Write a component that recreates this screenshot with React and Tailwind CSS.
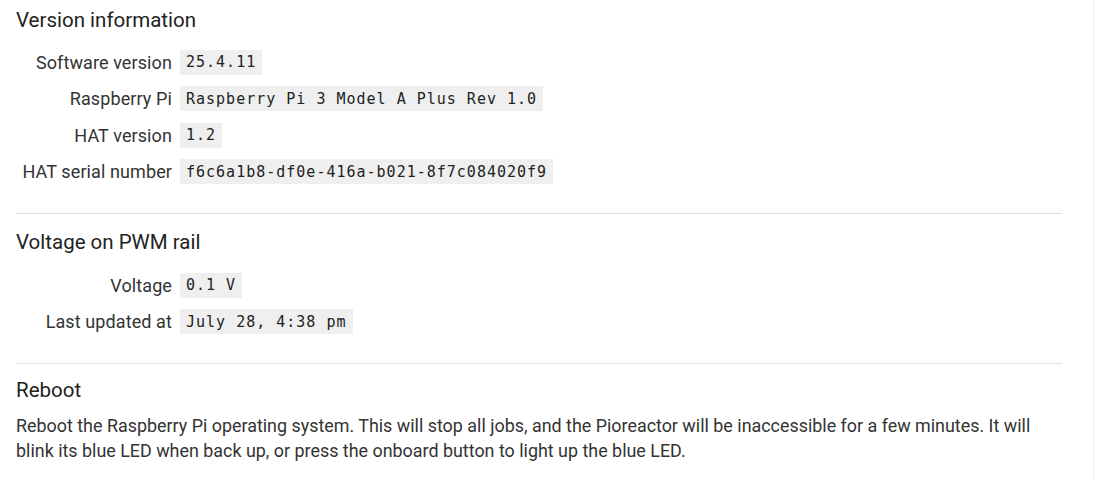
import React from 'react';

const versionRows = [
  ['Software version', '25.4.11'],
  ['Raspberry Pi', 'Raspberry Pi 3 Model A Plus Rev 1.0'],
  ['HAT version', '1.2'],
  ['HAT serial number', 'f6c6a1b8-df0e-416a-b021-8f7c084020f9'],
];

const voltageRows = [
  ['Voltage', '0.1 V'],
  ['Last updated at', 'July 28, 4:38 pm'],
];

const InfoRow = ({ label, value }) => (
  <div className="flex items-center h-[36.5px]">
    <div className="w-[156px] text-right text-[18px] tracking-[0.1px] text-[#333] whitespace-nowrap">{label}</div>
    <code className="ml-2 bg-[#efefef] px-[6px] h-[25px] flex items-center text-[15px] tracking-[1px] text-[#222] font-['DejaVu_Sans_Mono',monospace]">
      {value}
    </code>
  </div>
);

const SectionTitle = ({ children }) => (
  <h2 className="text-[20.5px] leading-[28px] text-[#222]">{children}</h2>
);

const App = () => {
  return (
    <div className="w-[1094px] h-[480px] bg-white border-r border-[#ececec] font-['Roboto',sans-serif] overflow-hidden">
      <div className="pl-4 w-[1062px]">
        <div className="pt-[6px]">
          <SectionTitle>Version information</SectionTitle>
          <div className="mt-[10px]">
            {versionRows.map(([label, value]) => (
              <InfoRow key={label} label={label} value={value} />
            ))}
          </div>
        </div>

        <div className="mt-[23px] border-t border-[#e0e0e0] pt-[14px]">
          <SectionTitle>Voltage on PWM rail</SectionTitle>
          <div className="mt-[11px]">
            {voltageRows.map(([label, value]) => (
              <InfoRow key={label} label={label} value={value} />
            ))}
          </div>
        </div>

        <div className="mt-[23px] border-t border-[#e0e0e0] pt-[12px]">
          <SectionTitle>Reboot</SectionTitle>
          <p className="mt-[9px] text-[17.9px] leading-[25px] text-[#333]">
            Reboot the Raspberry Pi operating system. This will stop all jobs, and the Pioreactor will be inaccessible for a few minutes. It will blink its blue LED when back up, or press the onboard button to light up the blue LED.
          </p>
        </div>
      </div>
    </div>
  );
};

export default App;
